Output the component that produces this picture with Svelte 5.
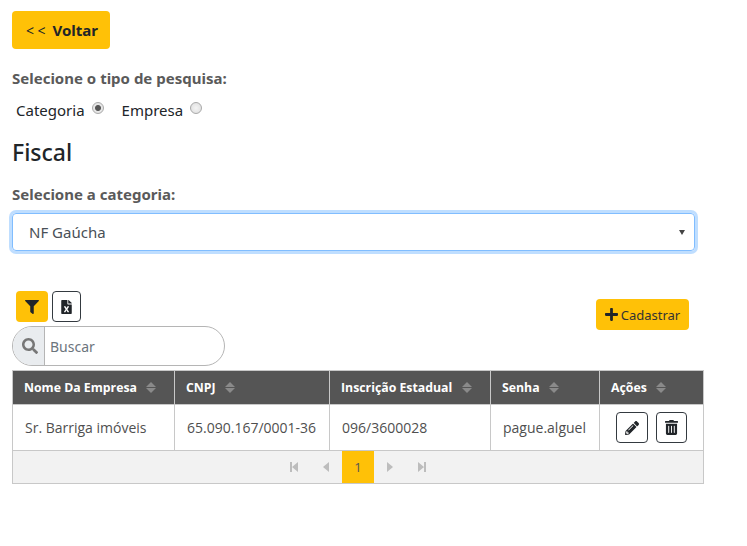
<script>
  let tipo = 'categoria';
  const columns = [
    { label: 'Nome Da Empresa', cls: 'c1' },
    { label: 'CNPJ', cls: 'c2' },
    { label: 'Inscrição Estadual', cls: 'c3' },
    { label: 'Senha', cls: 'c4' },
    { label: 'Ações', cls: 'c5' }
  ];
  const rows = [
    { nome: 'Sr. Barriga imóveis', cnpj: '65.090.167/0001-36', ie: '096/3600028', senha: 'pague.alguel' }
  ];
</script>

<div class="page">
  <button class="voltar"><span class="arrows">&lt; &lt;</span> Voltar</button>

  <p class="label tipo-label">Selecione o tipo de pesquisa:</p>
  <div class="radios">
    <label>Categoria <input type="radio" bind:group={tipo} value="categoria" /></label>
    <label>Empresa <input type="radio" bind:group={tipo} value="empresa" /></label>
  </div>

  <h2>Fiscal</h2>

  <p class="label cat-label">Selecione a categoria:</p>
  <div class="select">
    <span>NF Gaúcha</span>
    <i class="caret"></i>
  </div>

  <div class="toolbar">
    <div class="tools-left">
      <div class="tool-btns">
        <button class="filter" aria-label="Filtrar">
          <svg viewBox="0 0 512 512" width="14" height="14"><path d="M487.976 0H24.028C2.71 0-8.047 25.866 7.058 40.971L192 225.941V432c0 7.831 3.821 15.17 10.237 19.662l80 55.98C298.02 518.69 320 507.493 320 487.98V225.941l184.947-184.97C520.021 25.896 509.338 0 487.976 0z"/></svg>
        </button>
        <button class="excel" aria-label="Exportar">
          <svg viewBox="0 0 384 512" width="11" height="14"><path d="M224 136V0H24C10.7 0 0 10.7 0 24v464c0 13.3 10.7 24 24 24h336c13.3 0 24-10.7 24-24V160H248c-13.2 0-24-10.8-24-24zm60.1 106.5L224 336l60.1 93.5c5.1 8-.6 18.5-10.1 18.5h-34.9c-4.4 0-8.5-2.4-10.6-6.3C208.9 405.5 192 373 192 373c-6.4 14.8-10 20-36.6 68.8-2.1 3.9-6.1 6.3-10.5 6.3H110c-9.5 0-15.2-10.5-10.1-18.5l60.3-93.5-60.3-93.5c-5.2-8 .6-18.5 10.1-18.5h34.8c4.4 0 8.5 2.4 10.6 6.3 26.1 48.8 20 33.6 36.6 68.5 0 0 6.1-11.7 36.6-68.5 2.1-3.9 6.2-6.3 10.6-6.3H274c9.5-.1 15.2 10.4 10.1 18.4zM384 121.9v6.1H256V0h6.1c6.4 0 12.5 2.5 17 7l97.9 98c4.5 4.5 7 10.6 7 16.9z"/></svg>
        </button>
      </div>
      <div class="search">
        <span class="search-icon">
          <svg viewBox="0 0 512 512" width="16" height="16"><path d="M505 442.7L405.3 343c-4.5-4.5-10.6-7-17-7H372c27.6-35.3 44-79.7 44-128C416 93.1 322.9 0 208 0S0 93.1 0 208s93.1 208 208 208c48.3 0 92.7-16.4 128-44v16.3c0 6.4 2.5 12.5 7 17l99.7 99.7c9.4 9.4 24.6 9.4 33.9 0l28.3-28.3c9.4-9.4 9.4-24.6.1-34zM208 336c-70.7 0-128-57.2-128-128 0-70.7 57.2-128 128-128 70.7 0 128 57.2 128 128 0 70.7-57.2 128-128 128z"/></svg>
        </span>
        <span class="search-text">Buscar</span>
      </div>
    </div>
    <button class="cadastrar">
      <svg viewBox="0 0 448 512" width="13" height="15"><path d="M416 208H272V64c0-17.67-14.33-32-32-32h-32c-17.67 0-32 14.33-32 32v144H32c-17.67 0-32 14.33-32 32v32c0 17.67 14.33 32 32 32h144v144c0 17.67 14.33 32 32 32h32c17.67 0 32-14.33 32-32V304h144c17.67 0 32-14.33 32-32v-32c0-17.67-14.33-32-32-32z"/></svg>
      Cadastrar
    </button>
  </div>

  <div class="grid">
    <table>
      <thead>
        <tr>
          {#each columns as col}
            <th class={col.cls}>
              {col.label}
              <span class="sort"><i class="up"></i><i class="down"></i></span>
            </th>
          {/each}
        </tr>
      </thead>
      <tbody>
        {#each rows as row}
          <tr>
            <td>{row.nome}</td>
            <td>{row.cnpj}</td>
            <td>{row.ie}</td>
            <td>{row.senha}</td>
            <td class="acoes">
              <button class="act edit" aria-label="Editar">
                <svg viewBox="0 0 512 512" width="14" height="14"><path d="M497.9 142.1l-46.1 46.1c-4.7 4.7-12.3 4.7-17 0l-111-111c-4.7-4.7-4.7-12.3 0-17l46.1-46.1c18.7-18.7 49.1-18.7 67.9 0l60.1 60.1c18.8 18.7 18.8 49.1 0 67.9zM284.2 99.8L21.6 362.4.4 483.9c-2.9 16.4 11.4 30.6 27.8 27.8l121.5-21.3 262.6-262.6c4.7-4.7 4.7-12.3 0-17l-111-111c-4.8-4.7-12.4-4.7-17.1 0zM124.1 339.9c-5.5-5.5-5.5-14.3 0-19.8l154-154c5.5-5.5 14.3-5.5 19.8 0s5.5 14.3 0 19.8l-154 154c-5.5 5.5-14.3 5.5-19.8 0zM88 424h48v36.3l-64.5 11.3-31.1-31.1L51.7 376H88v48z"/></svg>
              </button>
              <button class="act trash" aria-label="Excluir">
                <svg viewBox="0 0 448 512" width="13" height="15"><path d="M32 464a48 48 0 0 0 48 48h288a48 48 0 0 0 48-48V128H32zm272-256a16 16 0 0 1 32 0v224a16 16 0 0 1-32 0zm-96 0a16 16 0 0 1 32 0v224a16 16 0 0 1-32 0zm-96 0a16 16 0 0 1 32 0v224a16 16 0 0 1-32 0zM432 32H312l-9.4-18.7A24 24 0 0 0 281.1 0H166.8a23.72 23.72 0 0 0-21.4 13.3L136 32H16A16 16 0 0 0 0 48v32a16 16 0 0 0 16 16h416a16 16 0 0 0 16-16V48a16 16 0 0 0-16-16z"/></svg>
              </button>
            </td>
          </tr>
        {/each}
      </tbody>
    </table>
    <div class="pager">
      <span class="pg"><svg viewBox="0 0 10 12" width="10" height="12"><path d="M1 1h2v10H1zM9 1v10L3 6z"/></svg></span>
      <span class="pg"><svg viewBox="0 0 10 12" width="10" height="12"><path d="M8 1v10L2 6z"/></svg></span>
      <span class="pg current">1</span>
      <span class="pg"><svg viewBox="0 0 10 12" width="10" height="12"><path d="M2 1v10l6-5z"/></svg></span>
      <span class="pg"><svg viewBox="0 0 10 12" width="10" height="12"><path d="M1 1v10l6-5zM7 1h2v10H7z"/></svg></span>
    </div>
  </div>
</div>

<style>
  :global(body) {
    margin: 0;
    background: #fff;
  }

  .page {
    padding: 11px 12px 0;
    font-family: "Noto Sans", "Open Sans", sans-serif;
    color: #212529;
    width: 692px;
    fill: #212529;
  }

  button {
    font-family: inherit;
    cursor: pointer;
  }

  .voltar {
    display: block;
    width: 98px;
    height: 38px;
    padding: 0 0 0 2px;
    background: #ffc107;
    border: 0;
    border-radius: 4px;
    font-size: 15px;
    font-weight: 700;
    color: #212529;
  }

  .arrows {
    font-weight: 400;
    font-size: 14px;
    margin-right: 3px;
  }

  .label {
    margin: 0;
    font-size: 15px;
    font-weight: 700;
    line-height: 20px;
    color: #5a5a5a;
  }

  .tipo-label {
    margin-top: 19px;
  }

  .radios {
    display: flex;
    gap: 15px;
    margin: 12px 0 0 4px;
    font-size: 15px;
    line-height: 20px;
  }

  .radios label {
    display: flex;
    align-items: center;
    gap: 7px;
    color: #212529;
  }

  .radios input {
    appearance: none;
    width: 12px;
    height: 12px;
    margin: -4px 3px 0 0;
    border: 1px solid #a9a9a9;
    border-radius: 50%;
    background: radial-gradient(circle, #f4f4f4, #dcdcdc);
  }

  .radios input:checked {
    background: radial-gradient(circle, #555 0 2.5px, #e6e6e6 3.5px);
  }

  h2 {
    margin: 17px 0 0;
    font-size: 23px;
    font-weight: 500;
    line-height: 30px;
    color: #212529;
  }

  .cat-label {
    margin-top: 17px;
  }

  .select {
    display: flex;
    align-items: center;
    justify-content: space-between;
    box-sizing: border-box;
    width: 683px;
    height: 38px;
    margin-top: 9px;
    padding: 0 9px 0 16px;
    border: 1px solid #80bdff;
    border-radius: 4px;
    box-shadow: 0 0 0 3px rgba(0, 123, 255, 0.25);
    font-size: 15px;
    color: #495057;
  }

  .caret {
    width: 0;
    height: 0;
    border-left: 3px solid transparent;
    border-right: 3px solid transparent;
    border-top: 5px solid #444;
  }

  .toolbar {
    display: flex;
    justify-content: space-between;
    align-items: flex-start;
    width: 677px;
    margin-top: 40px;
  }

  .tool-btns {
    display: flex;
    gap: 4px;
    margin-left: 4px;
  }

  .filter {
    display: flex;
    align-items: center;
    justify-content: center;
    width: 32px;
    height: 31px;
    padding: 0;
    background: #ffc107;
    border: 0;
    border-radius: 4px;
  }

  .excel {
    display: flex;
    align-items: center;
    justify-content: center;
    width: 29px;
    height: 31px;
    padding: 0;
    background: #fff;
    border: 1px solid #343a40;
    border-radius: 4px;
  }

  .search {
    display: flex;
    width: 213px;
    height: 40px;
    box-sizing: border-box;
    margin-top: 4px;
    border: 1px solid #b5b5b5;
    border-radius: 20px;
    overflow: hidden;
  }

  .search-icon {
    display: flex;
    align-items: center;
    justify-content: center;
    box-sizing: border-box;
    width: 32px;
    padding-left: 2px;
    background: #e9ecef;
    border-right: 1px solid #b5b5b5;
    fill: #777;
  }

  .search-text {
    align-self: center;
    padding-left: 5px;
    font-size: 14px;
    color: #6c757d;
  }

  .cadastrar {
    display: flex;
    align-items: center;
    justify-content: center;
    gap: 3px;
    width: 93px;
    height: 31px;
    margin-top: 8px;
    padding: 0;
    background: #ffc107;
    border: 0;
    border-radius: 4px;
    font-size: 13px;
    color: #333;
  }

  .grid {
    width: 692px;
    margin-top: 4px;
    font-family: "Open Sans", sans-serif;
  }

  table {
    width: 100%;
    table-layout: fixed;
    border-collapse: collapse;
  }

  th, td {
    box-sizing: border-box;
    border: 1px solid #c8c8c8;
    padding: 0 11px;
    text-align: left;
  }

  th {
    height: 34px;
    background: #555;
    color: #fff;
    font-size: 12.3px;
    font-weight: 700;
    white-space: nowrap;
  }

  td {
    height: 46px;
    font-size: 14px;
    color: #4f4f4f;
    white-space: nowrap;
    padding-left: 12px;
  }

  .c1 { width: 162px; }
  .c2 { width: 155px; }
  .c3 { width: 161px; }
  .c4 { width: 109px; }

  .sort {
    display: inline-block;
    margin-left: 6px;
    vertical-align: -1px;
  }

  .sort i {
    display: block;
    width: 0;
    height: 0;
    border-left: 5.5px solid transparent;
    border-right: 5.5px solid transparent;
  }

  .sort .up {
    border-bottom: 5.5px solid #8a8a8a;
    margin-bottom: 1px;
  }

  .sort .down {
    border-top: 5.5px solid #8a8a8a;
  }

  .acoes {
    padding: 0 0 0 16px;
  }

  .act {
    display: inline-flex;
    align-items: center;
    justify-content: center;
    height: 31px;
    padding: 0;
    background: #fff;
    border: 1px solid #343a40;
    border-radius: 4px;
    vertical-align: middle;
  }

  .edit {
    width: 32px;
    margin-right: 4px;
  }

  .trash {
    width: 31px;
  }

  .pager {
    display: flex;
    justify-content: center;
    box-sizing: border-box;
    height: 33px;
    background: #f2f2f2;
    border: 1px solid #c8c8c8;
    border-top: 0;
    fill: #bdbdbd;
  }

  .pg {
    display: flex;
    align-items: center;
    justify-content: center;
    width: 32px;
    height: 32px;
  }

  .pg.current {
    background: #ffc107;
    font-size: 13px;
    color: #555;
  }
</style>
